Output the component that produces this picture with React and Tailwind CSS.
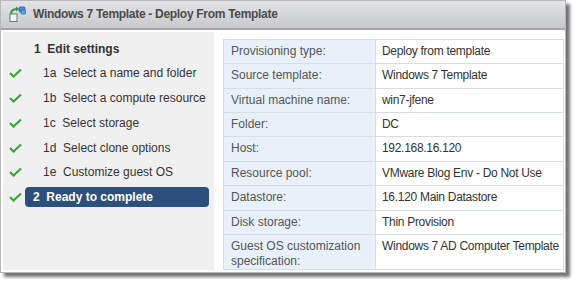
const steps = [
  { id: "1a", label: "Select a name and folder" },
  { id: "1b", label: "Select a compute resource" },
  { id: "1c", label: "Select storage" },
  { id: "1d", label: "Select clone options" },
  { id: "1e", label: "Customize guest OS" },
];

const rows = [
  ["Provisioning type:", "Deploy from template"],
  ["Source template:", "Windows 7 Template"],
  ["Virtual machine name:", "win7-jfene"],
  ["Folder:", "DC"],
  ["Host:", "192.168.16.120"],
  ["Resource pool:", "VMware Blog Env - Do Not Use"],
  ["Datastore:", "16.120 Main Datastore"],
  ["Disk storage:", "Thin Provision"],
  ["Guest OS customization specification:", "Windows 7 AD Computer Template"],
];

function Check() {
  return (
    <svg width="13" height="10" viewBox="0 0 13 10" className="shrink-0">
      <path d="M1 5 L4.5 8.5 L12 1.5" fill="none" stroke="#3aa63a" strokeWidth="2.2" />
    </svg>
  );
}

function DeployIcon() {
  return (
    <svg width="18" height="16" viewBox="0 0 18 16">
      <rect x="2" y="8" width="7" height="7.5" fill="#f4f4f4" stroke="#6b7280" strokeWidth="1" />
      <path d="M3 8 C3 4 6 3 9 3" fill="none" stroke="#2f9a35" strokeWidth="2" />
      <path d="M8 0.5 L11 3 L8 5.5 Z" fill="#2f9a35" />
      <rect x="11" y="1" width="6" height="5" rx="1" fill="#4a8fd8" stroke="#2f5f9e" strokeWidth="0.8" />
      <rect x="13" y="4" width="4.5" height="4" rx="1" fill="#6aa8e8" stroke="#2f5f9e" strokeWidth="0.8" />
    </svg>
  );
}

export default function App() {
  return (
    <div className="h-[286px] w-[581px] bg-white font-['Liberation_Sans',Arial,sans-serif] text-[12px] text-[#333]">
      <div className="flex h-[273px] w-[566px] flex-col border border-[#b8b8b8] bg-white shadow-[4px_4px_3px_rgba(0,0,0,0.55)]">
        <div className="flex h-[29px] items-center gap-[7px] border-b-2 border-[#a5a6a9] bg-[linear-gradient(180deg,#e2e3e6_0%,#c8c9cc_100%)] pl-[7px]">
          <DeployIcon />
          <span className="text-[12px] font-bold tracking-[-0.3px] text-[#4a4a4a]">
            Windows 7 Template - Deploy From Template
          </span>
        </div>
        <div className="flex flex-1 gap-[9px] pt-[2px] pb-[2px] pl-[2px]">
          <div className="flex w-[211px] flex-col bg-[#f0f0f0] pt-[5px]">
            <div className="flex h-[24px] items-center pl-[31px] font-bold text-[#333]">
              1&nbsp; Edit settings
            </div>
            {steps.map((s) => (
              <div key={s.id} className="flex h-[24.8px] items-center pl-[6px]">
                <Check />
                <span className="pl-[21px]">
                  {s.id}&nbsp; {s.label}
                </span>
              </div>
            ))}
            <div className="flex h-[24.8px] items-center pl-[6px]">
              <Check />
              <div className="ml-[3px] flex h-[20px] w-[184px] items-center rounded-[4px] bg-[#2b507d] pl-[8px] font-bold text-white">
                2&nbsp; Ready to complete
              </div>
            </div>
          </div>
          <div className="pt-[7px]">
            <table className="w-[341px] table-fixed border-collapse border border-[#d8dde2]">
              <colgroup>
                <col className="w-[152px]" />
                <col />
              </colgroup>
              <tbody>
                {rows.map(([k, v], i) => (
                  <tr key={k} className={i === rows.length - 1 ? "h-[35px]" : "h-[24.4px]"}>
                    <td className="border border-[#d8dde2] bg-[#e8f1f9] px-[7px] align-top pt-[4px] leading-[15px] text-[#555]">
                      {i === rows.length - 1 ? (
                        <>
                          Guest OS customization
                          <br />
                          specification:
                        </>
                      ) : (
                        k
                      )}
                    </td>
                    <td className="whitespace-nowrap border border-[#d8dde2] px-[6px] align-top pt-[4px] leading-[15px] tracking-[-0.3px] text-[#333]">
                      {v}
                    </td>
                  </tr>
                ))}
              </tbody>
            </table>
          </div>
        </div>
      </div>
    </div>
  );
}
